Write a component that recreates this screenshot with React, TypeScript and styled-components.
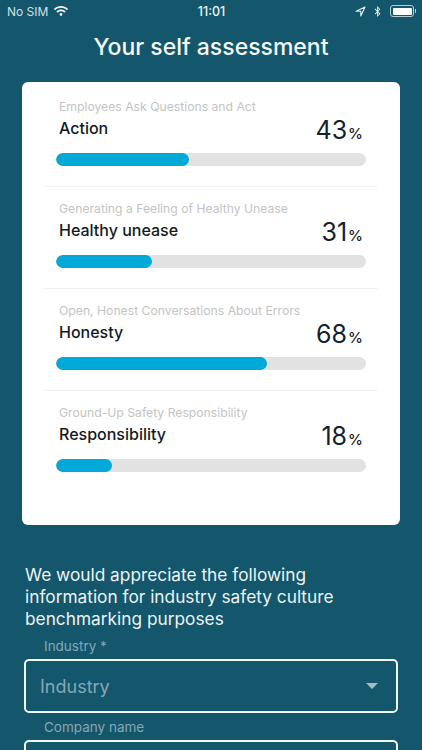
import styled, { createGlobalStyle } from "styled-components";
import { FaWifi, FaBluetoothB } from "react-icons/fa";

const GlobalStyle = createGlobalStyle`
  html, body {
    margin: 0;
    padding: 0;
    height: 100%;
    overflow: hidden;
    background: #14566b;
  }
`;

const Screen = styled.div`
  width: 422px;
  height: 750px;
  overflow: hidden;
  background: #14566b;
  font-family: Inter, "Liberation Sans", sans-serif;
  color: #fff;
`;

const StatusBar = styled.div`
  display: grid;
  grid-template-columns: 1fr auto 1fr;
  align-items: center;
  height: 22px;
  padding: 0 6px 0 7px;
  font-size: 12.5px;
`;

const StatusLeft = styled.div`
  display: flex;
  align-items: center;
  gap: 6px;
  font-size: 12px;
  color: #d3e0e4;
`;

const StatusTime = styled.div`
  font-weight: 500;
  color: #f0f5f6;
`;

const StatusRight = styled.div`
  display: flex;
  align-items: center;
  justify-content: flex-end;
  gap: 6px;
  color: #e6eef0;
`;

const Battery = styled.div`
  position: relative;
  box-sizing: border-box;
  width: 24px;
  height: 12px;
  padding: 1.5px;
  margin: 0 2px 0 1px;
  border: 1px solid #b9ccd2;
  border-radius: 3px;

  &::before {
    content: "";
    display: block;
    height: 100%;
    background: #fff;
    border-radius: 1px;
  }

  &::after {
    content: "";
    position: absolute;
    top: 3px;
    right: -3px;
    width: 1.5px;
    height: 4px;
    background: #b9ccd2;
  }
`;

const Title = styled.h1`
  margin: 0;
  padding-top: 9px;
  height: 51px;
  box-sizing: border-box;
  line-height: 32px;
  text-align: center;
  font-size: 23px;
  font-weight: 500;
  color: #f6fafb;
`;

const Card = styled.section`
  box-sizing: border-box;
  height: 443px;
  margin: 9px 22px 0;
  padding: 3px 22px 0;
  background: #fff;
  border-radius: 6px;
`;

const Row = styled.div`
  box-sizing: border-box;
  height: 102px;
  padding: 14px 12px 0;
  border-bottom: 1px solid #f1f1f1;

  &:last-child {
    border-bottom: none;
  }
`;

const RowSub = styled.div`
  margin-left: 3px;
  height: 16px;
  line-height: 16px;
  font-size: 12.2px;
  color: #c4c4c4;
`;

const RowHead = styled.div`
  display: flex;
  align-items: flex-start;
  justify-content: space-between;
  height: 32px;
  margin: 0 3px 0 3px;
`;

const RowName = styled.div`
  padding-top: 3px;
  line-height: 20px;
  font-size: 16px;
  font-weight: 500;
  color: #111a1f;
`;

const Score = styled.div`
  line-height: 30px;
  font-size: 25px;
  color: #16212a;
`;

const PercentSign = styled.span`
  margin-left: 1px;
  font-size: 15px;
  font-weight: 500;
`;

const Track = styled.div`
  height: 13px;
  margin-top: 6px;
  background: #e2e2e2;
  border-radius: 7px;
  overflow: hidden;
`;

const Fill = styled.div`
  height: 100%;
  background: #00a9d8;
  border-radius: 7px;
`;

const Intro = styled.p`
  margin: 39px 25px 8px;
  font-size: 17.3px;
  line-height: 22px;
  color: #ecf4f6;
`;

const FieldLabel = styled.div`
  height: 16px;
  margin: 6px 0 5px 44px;
  line-height: 16px;
  font-size: 13.5px;
  color: #85a8b4;
`;

const SelectBox = styled.div`
  box-sizing: border-box;
  display: flex;
  align-items: center;
  justify-content: space-between;
  height: 54px;
  margin: 0 24px;
  padding: 0 18px 0 14px;
  border: 2px solid #f2f7f8;
  border-radius: 5px;
  font-size: 18px;
  color: #85a8b4;
`;

const Caret = styled.div`
  width: 0;
  height: 0;
  border-left: 6.5px solid transparent;
  border-right: 6.5px solid transparent;
  border-top: 6px solid #a3bdc6;
`;

const rows = [
  { sub: "Employees Ask Questions and Act", name: "Action", value: 43 },
  { sub: "Generating a Feeling of Healthy Unease", name: "Healthy unease", value: 31 },
  { sub: "Open, Honest Conversations About Errors", name: "Honesty", value: 68 },
  { sub: "Ground-Up Safety Responsibility", name: "Responsibility", value: 18 },
];

export default function App() {
  return (
    <>
      <GlobalStyle />
      <Screen>
        <StatusBar>
          <StatusLeft>
            No SIM
            <FaWifi size={14} color="#f0f5f6" />
          </StatusLeft>
          <StatusTime>11:01</StatusTime>
          <StatusRight>
            <svg width="11" height="11" viewBox="0 0 11 11" fill="none" stroke="currentColor" strokeWidth="1.1" strokeLinejoin="round">
              <path d="M10 1 1 5.2h4.8V10z" />
            </svg>
            <FaBluetoothB size={11} />
            <Battery />
          </StatusRight>
        </StatusBar>

        <Title>Your self assessment</Title>

        <Card>
          {rows.map((row) => (
            <Row key={row.name}>
              <RowSub>{row.sub}</RowSub>
              <RowHead>
                <RowName>{row.name}</RowName>
                <Score>
                  {row.value}
                  <PercentSign>%</PercentSign>
                </Score>
              </RowHead>
              <Track>
                <Fill style={{ width: `${row.value}%` }} />
              </Track>
            </Row>
          ))}
        </Card>

        <Intro>
          We would appreciate the following information for industry safety
          culture benchmarking purposes
        </Intro>

        <FieldLabel>Industry *</FieldLabel>
        <SelectBox>
          Industry
          <Caret />
        </SelectBox>

        <FieldLabel>Company name</FieldLabel>
        <SelectBox />
      </Screen>
    </>
  );
}
